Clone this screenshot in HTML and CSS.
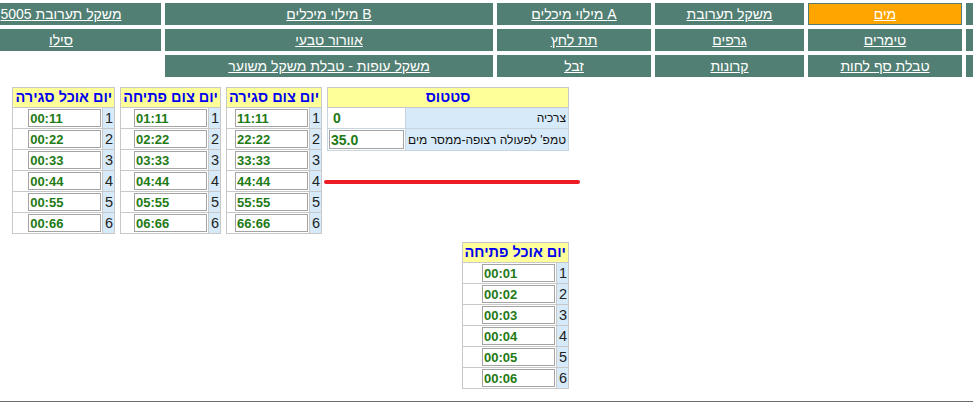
FILE: index.html
```html
<!DOCTYPE html>
<html lang="he" dir="rtl">
<head>
<meta charset="utf-8">
<title>מים</title>
<link rel="stylesheet" href="styles.css">
</head>
<body>
<div class="page">
  <nav class="nav">
    <a class="cell">&nbsp;</a>
    <a class="cell active" href="#"><span>מים</span></a>
    <a class="cell" href="#"><span>משקל תערובת</span></a>
    <a class="cell" href="#"><span>A מילוי מיכלים</span></a>
    <a class="cell" href="#"><span>B מילוי מיכלים</span></a>
    <a class="cell" href="#"><span>משקל תערובת 5005</span></a>

    <a class="cell">&nbsp;</a>
    <a class="cell" href="#"><span>טימרים</span></a>
    <a class="cell" href="#"><span>גרפים</span></a>
    <a class="cell" href="#"><span>תת לחץ</span></a>
    <a class="cell" href="#"><span>אוורור טבעי</span></a>
    <a class="cell" href="#"><span>סילו</span></a>

    <a class="cell">&nbsp;</a>
    <a class="cell" href="#"><span>טבלת סף לחות</span></a>
    <a class="cell" href="#"><span>קרונות</span></a>
    <a class="cell" href="#"><span>זבל</span></a>
    <a class="cell" href="#"><span>משקל עופות - טבלת משקל משוער</span></a>
    <div class="empty"></div>
  </nav>

  <main class="main">
    <table class="status">
      <tr><th colspan="2">סטטוס</th></tr>
      <tr><td class="lbl">צרכיה</td><td class="sval">0</td></tr>
      <tr><td class="lbl">טמפ' לפעולה רצופה-ממסר מים</td><td class="sinp"><input value="35.0"></td></tr>
    </table>

    <table class="tt">
      <tr><th colspan="2">יום צום סגירה</th></tr>
      <tr><td class="num">1</td><td class="val"><input value="11:11"></td></tr>
      <tr><td class="num">2</td><td class="val"><input value="22:22"></td></tr>
      <tr><td class="num">3</td><td class="val"><input value="33:33"></td></tr>
      <tr><td class="num">4</td><td class="val"><input value="44:44"></td></tr>
      <tr><td class="num">5</td><td class="val"><input value="55:55"></td></tr>
      <tr><td class="num">6</td><td class="val"><input value="66:66"></td></tr>
    </table>

    <table class="tt">
      <tr><th colspan="2">יום צום פתיחה</th></tr>
      <tr><td class="num">1</td><td class="val"><input value="01:11"></td></tr>
      <tr><td class="num">2</td><td class="val"><input value="02:22"></td></tr>
      <tr><td class="num">3</td><td class="val"><input value="03:33"></td></tr>
      <tr><td class="num">4</td><td class="val"><input value="04:44"></td></tr>
      <tr><td class="num">5</td><td class="val"><input value="05:55"></td></tr>
      <tr><td class="num">6</td><td class="val"><input value="06:66"></td></tr>
    </table>

    <table class="tt">
      <tr><th colspan="2">יום אוכל סגירה</th></tr>
      <tr><td class="num">1</td><td class="val"><input value="00:11"></td></tr>
      <tr><td class="num">2</td><td class="val"><input value="00:22"></td></tr>
      <tr><td class="num">3</td><td class="val"><input value="00:33"></td></tr>
      <tr><td class="num">4</td><td class="val"><input value="00:44"></td></tr>
      <tr><td class="num">5</td><td class="val"><input value="00:55"></td></tr>
      <tr><td class="num">6</td><td class="val"><input value="00:66"></td></tr>
    </table>

    <table class="tt below">
      <tr><th colspan="2">יום אוכל פתיחה</th></tr>
      <tr><td class="num">1</td><td class="val"><input value="00:01"></td></tr>
      <tr><td class="num">2</td><td class="val"><input value="00:02"></td></tr>
      <tr><td class="num">3</td><td class="val"><input value="00:03"></td></tr>
      <tr><td class="num">4</td><td class="val"><input value="00:04"></td></tr>
      <tr><td class="num">5</td><td class="val"><input value="00:05"></td></tr>
      <tr><td class="num">6</td><td class="val"><input value="00:06"></td></tr>
    </table>
  </main>

  <div class="rule"></div>
  <div class="redline"></div>
</div>
</body>
</html>
```

FILE: styles.css
```css
html, body {
  margin: 0;
  padding: 0;
  background: #fff;
}
body {
  font-family: "Liberation Sans", Arial, sans-serif;
  direction: rtl;
}
.page {
  position: relative;
  overflow: hidden;
  width: 973px;
  height: 402px;
  padding-top: 3px;
  box-sizing: border-box;
}
.nav {
  display: grid;
  grid-template-columns: 150px 154px 149px 154px 328px 200px;
  grid-auto-rows: 22px;
  gap: 4px;
  width: 1155px;
  margin-right: -143px;
}
.cell {
  background: #527f73;
  color: #fff;
  display: flex;
  align-items: center;
  justify-content: center;
  font-size: 14px;
  text-decoration: none;
  white-space: nowrap;
  overflow: hidden;
}
.cell span {
  text-decoration: underline;
  line-height: 16px;
}
.cell.active {
  background: #ffa500;
  border: 1px solid #4f7b70;
  box-sizing: border-box;
}
.main {
  display: grid;
  grid-template-columns: auto auto auto auto;
  justify-content: start;
  align-items: start;
  column-gap: 5px;
  row-gap: 8px;
  margin-top: 10px;
  padding-right: 404px;
}
table {
  border-collapse: collapse;
  font-family: "Liberation Sans", Arial, sans-serif;
}
th {
  background: #ffff99;
  color: #0000f0;
  font-weight: bold;
  font-size: 14.5px;
  line-height: 19px;
  padding: 0 2px;
  white-space: nowrap;
  border: 1px solid #c8c8c8;
}
.tt td {
  border: 1px solid #c8c8c8;
  padding: 0;
}
.tt .num {
  background: #d6eaf9;
  width: 10px;
  text-align: center;
  font-size: 14.5px;
  line-height: 18px;
  color: #222;
  padding: 0 0 0 1px;
}
.tt .val {
  padding: 1px 1px 1px 0;
  text-align: right;
}
input {
  width: 73px;
  height: 18px;
  box-sizing: border-box;
  border: 1px solid #a4a4a4;
  padding: 0 1px;
  margin: 0;
  direction: ltr;
  text-align: left;
  font-family: "Liberation Sans", Arial, sans-serif;
  font-size: 13px;
  font-weight: bold;
  color: #1e7a14;
  background: #fff;
  display: block;
}
.status td {
  border: 1px solid #c8d4de;
  padding: 0;
}
.status .lbl {
  background: #d6eaf9;
  font-size: 12px;
  line-height: 20px;
  color: #111;
  padding: 0 2px;
  white-space: nowrap;
  text-align: right;
}
.status .sval {
  text-align: left;
  padding-left: 5px;
  font-size: 14px;
  line-height: 20px;
  font-weight: bold;
  color: #1e7a14;
  background: #fff;
}
.status .sinp {
  padding: 1px;
  background: #fff;
}
.status .sinp input {
  width: 75px;
  height: 19px;
  font-size: 14px;
}
.below {
  grid-column: 1;
  grid-row: 2;
  justify-self: start;
}
.rule {
  position: absolute;
  left: 0;
  right: 0;
  top: 401px;
  height: 1px;
  background: #6b6b6b;
}
.redline {
  position: absolute;
  left: 324px;
  top: 180px;
  width: 256px;
  height: 4px;
  border-radius: 2px;
  background: #ed1c24;
}
```
